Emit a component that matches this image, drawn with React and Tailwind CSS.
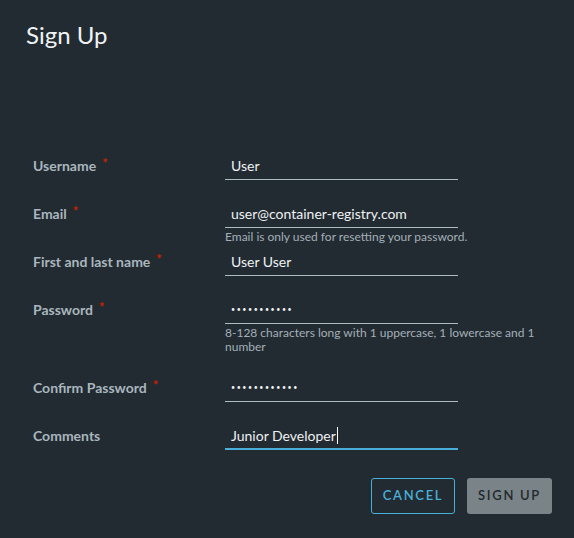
import React from "react";

const font = { fontFamily: "Lato, 'Open Sans', sans-serif" };

const Label = ({ text, required }) => (
  <div className="w-[192px] shrink-0 pt-[1px] text-[14px] font-bold text-[#a9b6be] leading-[20px]">
    {text}
    {required && <span className="ml-[6px] relative -top-[3px] text-[13px] text-[#c92100]">*</span>}
  </div>
);

const Field = ({ label, required, value, dots, helper, height, active }) => (
  <div className={`flex ${height}`}>
    <Label text={label} required={required} />
    <div className="flex flex-col">
      <div
        className={`w-[233px] h-[25px] pl-[6px] pb-[3px] flex items-center text-[14px] text-[#eef1f3] ${
          active ? "border-b-2 border-[#49afd9]" : "border-b border-[#acbac3]"
        }`}
      >
        {dots ? (
          <span className="text-[7px] tracking-[1.6px] leading-none">{"•".repeat(dots)}</span>
        ) : (
          <span>{value}</span>
        )}
        {active && <span className="ml-[1px] w-px h-[17px] bg-white" />}
      </div>
      {helper && (
        <div className="mt-[2px] text-[12px] leading-[14px] text-[#a2afb8] whitespace-nowrap">
          {helper}
        </div>
      )}
    </div>
  </div>
);

export default function App() {
  return (
    <div style={font} className="w-[574px] h-[538px] bg-[#222b31] relative overflow-hidden">
      <h1 className="pt-[20px] pl-[26px] text-[24px] leading-[30px] text-[#f0f3f5] font-normal">
        Sign Up
      </h1>

      <div className="mt-[105px] pl-[33px] flex flex-col">
        <Field label="Username" required value="User" height="h-[48px]" />
        <Field
          label="Email"
          required
          value="user@container-registry.com"
          helper="Email is only used for resetting your password."
          height="h-[48px]"
        />
        <Field label="First and last name" required value="User User" height="h-[48px]" />
        <Field
          label="Password"
          required
          dots={11}
          helper={
            <>
              8-128 characters long with 1 uppercase, 1 lowercase and 1
              <br />
              number
            </>
          }
          height="h-[78px]"
        />
        <Field label="Confirm Password" required dots={12} height="h-[48px]" />
        <Field label="Comments" value="Junior Developer" active height="h-[48px]" />
      </div>

      <div className="absolute right-[22px] top-[478px] flex gap-[12px]">
        <button className="w-[84px] h-[36px] rounded-[3px] border border-[#49afd9] text-[#49afd9] text-[13px] font-semibold tracking-[0.13em]">
          CANCEL
        </button>
        <button className="w-[85px] h-[36px] rounded-[3px] bg-[#7a8387] text-[#21282d] text-[13px] font-semibold tracking-[0.13em]">
          SIGN UP
        </button>
      </div>
    </div>
  );
}
